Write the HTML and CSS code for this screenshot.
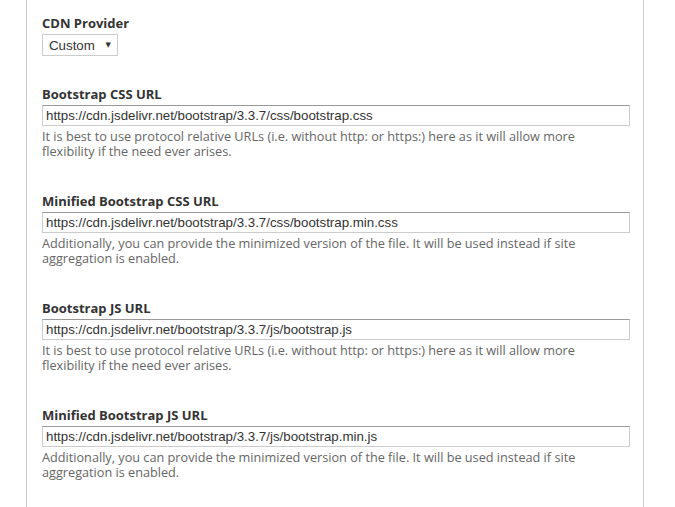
FILE: index.html
```html
<!DOCTYPE html>
<html lang="en">
<head>
    <meta charset="UTF-8">
    <meta name="viewport" content="width=device-width, initial-scale=1.0">
    <title>Bootstrap CDN settings</title>
    <link rel="stylesheet" href="styles.css">
</head>
<body>
    <div class="panel">
        <div class="form-item form-item-first">
            <label for="cdnProvider">CDN Provider</label>
            <div class="select-wrap">
                <select id="cdnProvider">
                    <option>Custom</option>
                </select>
            </div>
        </div>

        <div class="form-item">
            <label for="cssUrl">Bootstrap CSS URL</label>
            <input type="text" id="cssUrl" value="https://cdn.jsdelivr.net/bootstrap/3.3.7/css/bootstrap.css">
            <div class="description">It is best to use protocol relative URLs (i.e. without http: or https:) here as it will allow more flexibility if the need ever arises.</div>
        </div>

        <div class="form-item">
            <label for="cssMinUrl">Minified Bootstrap CSS URL</label>
            <input type="text" id="cssMinUrl" value="https://cdn.jsdelivr.net/bootstrap/3.3.7/css/bootstrap.min.css">
            <div class="description">Additionally, you can provide the minimized version of the file. It will be used instead if site aggregation is enabled.</div>
        </div>

        <div class="form-item">
            <label for="jsUrl">Bootstrap JS URL</label>
            <input type="text" id="jsUrl" value="https://cdn.jsdelivr.net/bootstrap/3.3.7/js/bootstrap.js">
            <div class="description">It is best to use protocol relative URLs (i.e. without http: or https:) here as it will allow more flexibility if the need ever arises.</div>
        </div>

        <div class="form-item">
            <label for="jsMinUrl">Minified Bootstrap JS URL</label>
            <input type="text" id="jsMinUrl" value="https://cdn.jsdelivr.net/bootstrap/3.3.7/js/bootstrap.min.js">
            <div class="description">Additionally, you can provide the minimized version of the file. It will be used instead if site aggregation is enabled.</div>
        </div>
    </div>
</body>
</html>
```

FILE: styles.css
```css
body { margin: 0; background: #fff; font-family: "Open Sans", "DejaVu Sans", sans-serif; color: #333; overflow: hidden; }
.panel { margin-left: 26px; width: 618px; height: 507px; box-sizing: border-box; border-left: 1px solid #ccc; border-right: 1px solid #ccc; padding: 14px 0 0 15px; }
.form-item { margin-bottom: 33px; }
.form-item-first { margin-bottom: 29px; }
label { display: block; font-size: 13px; font-weight: bold; line-height: 18px; margin-bottom: 2px; color: #333; }
input { display: block; box-sizing: border-box; width: 588px; height: 21px; margin: 0; padding: 0 3px; border: 1px solid #ccc; border-top-color: #999; font-family: "Liberation Sans", Arial, sans-serif; font-size: 13.3px; color: #333; background: #fff; }
.select-wrap { position: relative; width: 76px; }
select { appearance: none; -webkit-appearance: none; display: block; box-sizing: border-box; width: 76px; height: 22px; margin: 0; padding: 0 0 0 6px; border: 1px solid #ccc; border-radius: 0; background: #fff; font-family: "Liberation Sans", Arial, sans-serif; font-size: 13.3px; color: #333; }
.select-wrap::after { content: "\25BC"; position: absolute; right: 7px; top: 6px; font-size: 7px; color: #333; pointer-events: none; }
.description { max-width: 580px; margin-top: 3px; font-size: 12.7px; line-height: 15px; color: #666; }
```
